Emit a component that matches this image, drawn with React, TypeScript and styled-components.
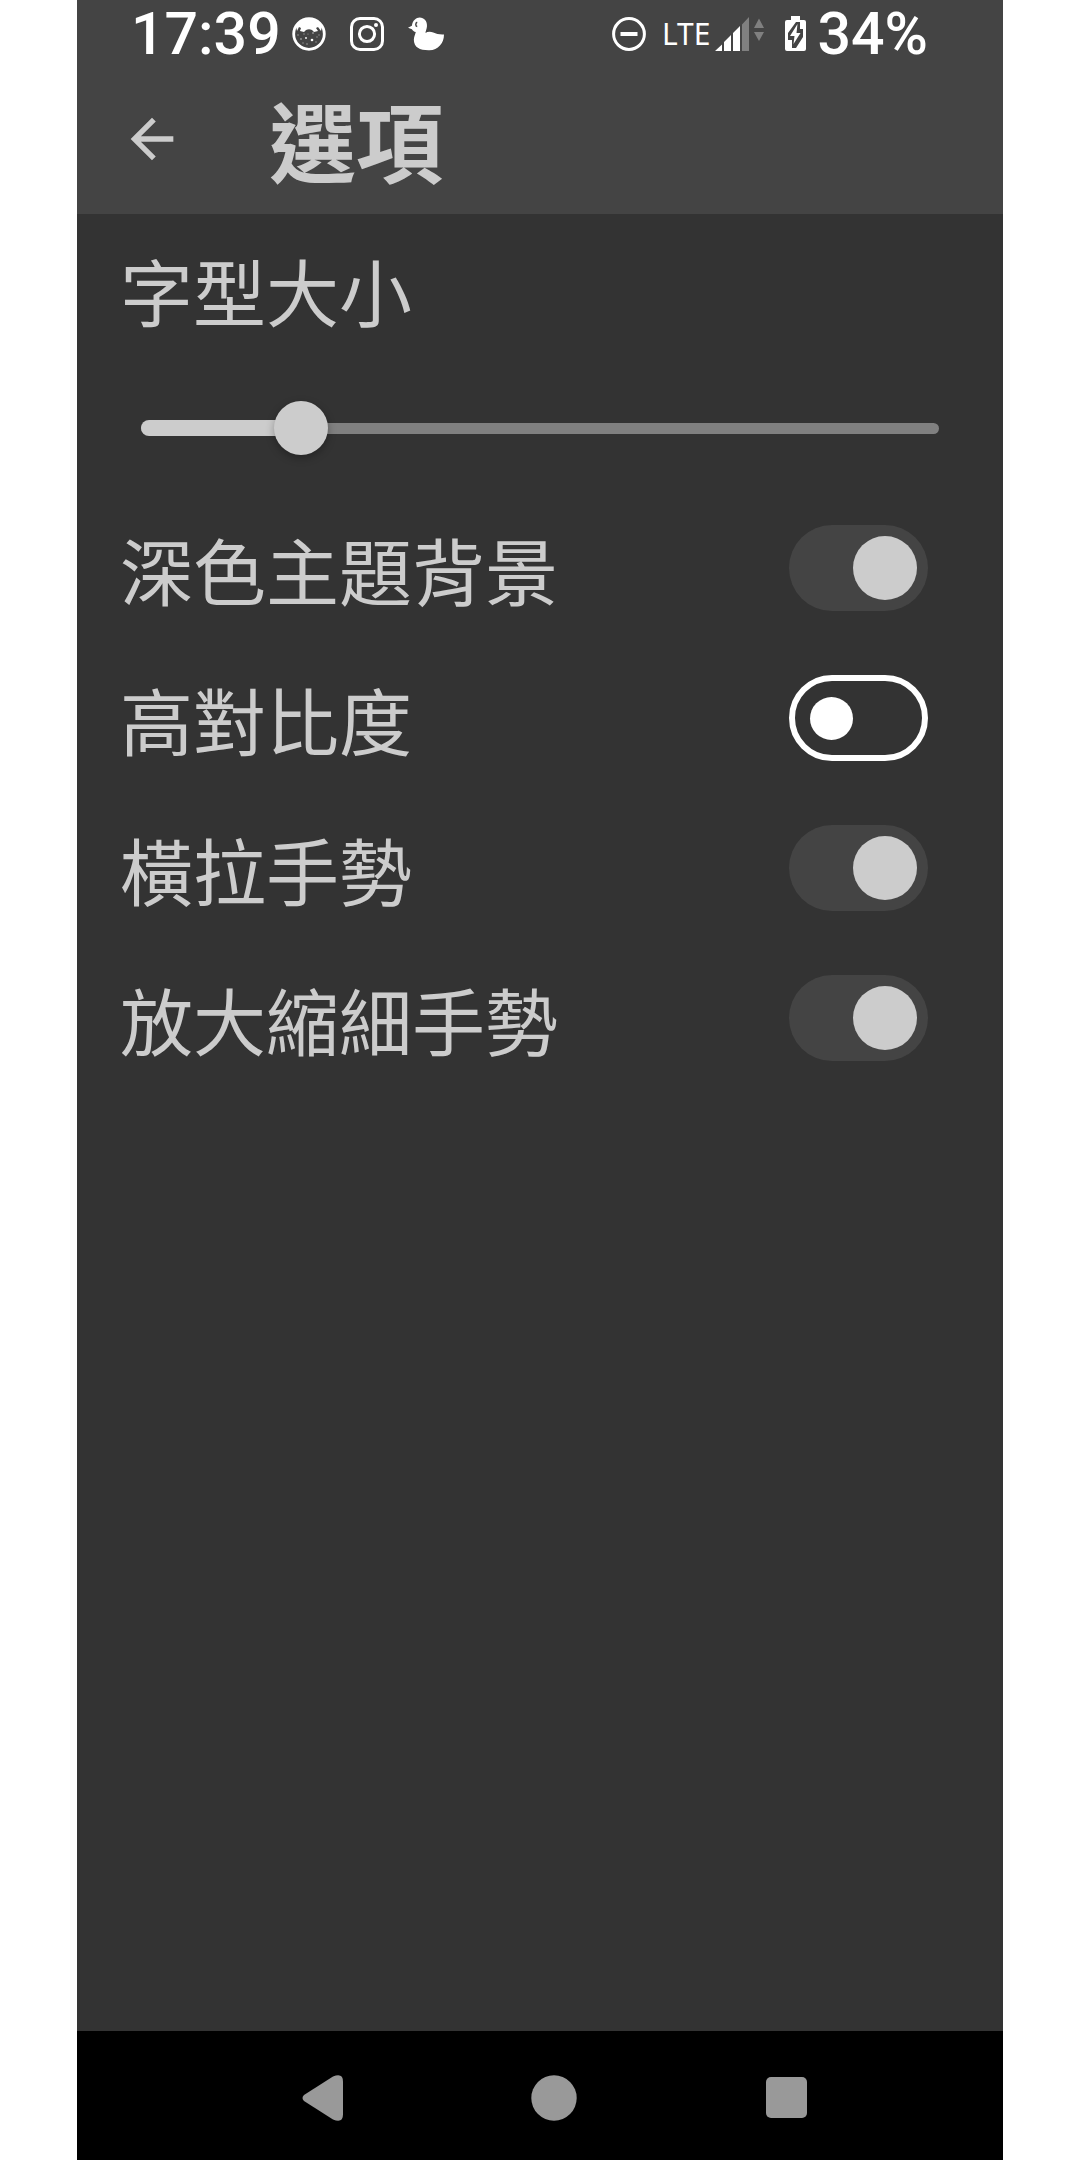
import React, { useState } from 'react';
import styled, { createGlobalStyle } from 'styled-components';

const GlobalStyle = createGlobalStyle`
  *, *::before { box-sizing: border-box; }
  body { margin: 0; background: #fff; }
`;

const Phone = styled.div`
  display: flex;
  flex-direction: column;
  max-width: 926px;
  min-height: 100vh;
  margin: 0 auto;
  background: #333;
  color: #ccc;
  font-family: Roboto, 'Noto Sans CJK TC', sans-serif;
`;

const StatusBar = styled.div`
  display: flex;
  justify-content: space-between;
  height: 64px;
  padding: 4px 75px 0 54px;
  background: #444;
  color: #fff;
`;

const StatusGroup = styled.div<{ $gap: number }>`
  display: flex;
  align-items: center;
  gap: ${(p) => p.$gap}px;
`;

const StatusText = styled.span`
  font-size: 59px;
  font-weight: 500;
  line-height: 60px;
`;

const NetworkText = styled.span`
  font-family: 'Noto Sans', sans-serif;
  font-size: 30px;
  line-height: 32px;
`;

const Icon = styled.svg`
  display: block;
  flex: none;
`;

const AppBar = styled.header`
  display: flex;
  align-items: center;
  gap: 85px;
  height: 150px;
  padding: 0 43px;
  background: #444;
`;

const IconButton = styled.button`
  padding: 0;
  border: 0;
  background: none;
  color: inherit;
  cursor: pointer;
`;

const Title = styled.h1`
  margin: 0;
  font-family: 'Noto Sans CJK TC', sans-serif;
  font-size: 87px;
  font-weight: 700;
  line-height: 96px;
`;

const Content = styled.main`
  flex: 1;
  padding: 33px 75px 32px 43px;
`;

const Label = styled.label`
  display: block;
  font-family: 'Noto Sans CJK TC', sans-serif;
  font-size: 73px;
  line-height: 84px;
`;

const Slider = styled.div`
  display: grid;
  align-items: center;
  height: 54px;
  margin: 70px -11px 38px 21px;
  > * { grid-area: 1 / 1; }
`;

const Track = styled.div`
  height: 11px;
  border-radius: 6px;
  background: #808080;
`;

const Fill = styled.div`
  height: 16px;
  border-radius: 8px;
  background: #ccc;
`;

const Range = styled.input`
  appearance: none;
  width: calc(100% + 54px);
  height: 54px;
  margin: 0 -27px;
  background: transparent;
  &::-webkit-slider-thumb {
    appearance: none;
    width: 54px;
    height: 54px;
    border-radius: 50%;
    background: #ccc;
    box-shadow: 0 3px 8px rgba(0, 0, 0, 0.3);
  }
`;

const Row = styled.div`
  display: flex;
  align-items: center;
  justify-content: space-between;
  height: 150px;
`;

const Switch = styled.input`
  appearance: none;
  display: flex;
  flex: none;
  align-items: center;
  width: 139px;
  height: 86px;
  margin: 0;
  padding: 0 15px;
  border: 6px solid #fff;
  border-radius: 43px;
  &::before {
    content: '';
    width: 43px;
    height: 43px;
    border-radius: 50%;
    background: #fff;
  }
  &:checked {
    justify-content: flex-end;
    padding: 0 11px;
    border: 0;
    background: #444;
  }
  &:checked::before {
    width: 64px;
    height: 64px;
    background: #ccc;
  }
`;

const NavBar = styled.nav`
  display: flex;
  justify-content: center;
  height: 129px;
  padding: 4px 0 0 28px;
  background: #000;
  color: #999;
`;

const NavButton = styled(IconButton)`
  display: grid;
  flex: none;
  place-items: center;
  width: 232px;
`;

const CatIcon = () => (
  <Icon width="34" height="34" viewBox="0 0 34 34">
    <circle cx="17" cy="17" r="15.3" fill="none" stroke="currentColor" strokeWidth="2.8" />
    <path fill="currentColor" d="M4 9C7 4 11 1 17 1s10 3 13 8l-1 5-3-4-2 1 2 3-4 1-2-2c-2-1-4-1-6 0l-2 2-4-1 1-3-2-1-2 4z" />
    <g fill="#999">
      <circle cx="6" cy="18" r=".8" /><circle cx="12" cy="17" r=".7" />
      <circle cx="21" cy="16" r=".9" /><circle cx="27" cy="18" r=".7" />
      <circle cx="9" cy="22" r=".9" /><circle cx="15" cy="27" r=".8" />
      <circle cx="24" cy="25" r=".7" /><circle cx="16" cy="17" r=".6" />
      <circle cx="25" cy="20" r=".7" /><circle cx="11" cy="26" r=".7" />
    </g>
    <circle cx="20" cy="23" r="1.3" fill="currentColor" />
    <circle cx="14" cy="21" r=".9" fill="currentColor" />
  </Icon>
);

const CameraIcon = () => (
  <Icon width="34" height="34" viewBox="0 0 34 34" fill="none" stroke="currentColor" strokeWidth="3">
    <rect x="1.5" y="1.5" width="31" height="31" rx="8.5" />
    <circle cx="17" cy="17" r="7.6" />
    <circle cx="26" cy="8" r="2" fill="currentColor" stroke="none" />
  </Icon>
);

const DuckIcon = () => (
  <Icon width="36" height="34" viewBox="0 0 37 34">
    <path fill="currentColor" d="M4 8.500C4.500 3 8.500 0 12 0c4.500 0 8 4 7.500 9-.2 3-1.500 5-1.500 7 2-1.500 5-1.700 8-.5 3 1.200 7 2.500 11 2 0 9-6 16-15 16.300C12.500 34 6 31 6 23c0-3 1.500-5.500 2-8-2-.5-3-1.500-4-3L0 10.500z" />
    <path fill="none" stroke="#444" strokeWidth="1.500" d="M9.500 5c-2 .5-2 4 0 4.300" />
  </Icon>
);

const DoNotDisturbIcon = () => (
  <Icon width="34" height="34" viewBox="0 0 34 34" fill="none" stroke="currentColor">
    <circle cx="17" cy="17" r="15.400" strokeWidth="3" />
    <path strokeWidth="4" d="M8.500 17h17" />
  </Icon>
);

const SignalIcon = () => (
  <Icon width="50" height="34" viewBox="0 0 50 34">
    <path fill="currentColor" d="M0 34l7-6.500V34zM9 25l7-7v16H9zM18 16l7-7v25h-7z" />
    <path fill="#808080" d="M27 7.500L34 0v34h-7zM39 11l5-9.500 5 9.500zM39 15h10l-5 9z" />
  </Icon>
);

const BatteryIcon = () => (
  <Icon width="21" height="36" viewBox="0 0 21 36">
    <path fill="currentColor" d="M6 0h9v4h4q2 0 2 2v27q0 2-2 2H2q-2 0-2-2V6q0-2 2-2h4z" />
    <path fill="#444" d="M11 6h4v7h3v8L11 32H7V24H3v-7z" />
    <path fill="currentColor" d="M12.500 8L5 20h4.500L8.500 28l7-11h-4z" />
  </Icon>
);

const BackIcon = () => (
  <Icon width="64" height="64" viewBox="0 0 24 24" fill="currentColor">
    <path d="M20 11H7.830l5.590-5.590L12 4l-8 8 8 8 1.410-1.410L7.830 13H20z" />
  </Icon>
);

const switches = [
  { id: 'dark', label: '深色主題背景', on: true },
  { id: 'contrast', label: '高對比度', on: false },
  { id: 'swipe', label: '橫拉手勢', on: true },
  { id: 'pinch', label: '放大縮細手勢', on: true },
];

export default function App() {
  const [size, setSize] = useState(20);
  return (
    <Phone>
      <GlobalStyle />
      <StatusBar>
        <StatusGroup $gap={24}>
          <StatusGroup $gap={11}>
            <StatusText>17:39</StatusText>
            <CatIcon />
          </StatusGroup>
          <CameraIcon />
          <DuckIcon />
        </StatusGroup>
        <StatusGroup $gap={11}>
          <StatusGroup $gap={20}>
            <StatusGroup $gap={16}>
              <DoNotDisturbIcon />
              <StatusGroup $gap={5}>
                <NetworkText>LTE</NetworkText>
                <SignalIcon />
              </StatusGroup>
            </StatusGroup>
            <BatteryIcon />
          </StatusGroup>
          <StatusText>34%</StatusText>
        </StatusGroup>
      </StatusBar>
      <AppBar>
        <IconButton aria-label="返回"><BackIcon /></IconButton>
        <Title>選項</Title>
      </AppBar>
      <Content>
        <Label htmlFor="font-size">字型大小</Label>
        <Slider>
          <Track />
          <Fill style={{ width: `${size}%` }} />
          <Range
            id="font-size"
            type="range"
            min="0"
            max="100"
            value={size}
            onChange={(e) => setSize(Number(e.target.value))}
          />
        </Slider>
        {switches.map((s) => (
          <Row key={s.id}>
            <Label htmlFor={s.id}>{s.label}</Label>
            <Switch id={s.id} type="checkbox" defaultChecked={s.on} />
          </Row>
        ))}
      </Content>
      <NavBar>
        <NavButton aria-label="返回">
          <Icon width="41" height="46" viewBox="0 0 41 46" fill="currentColor">
            <path d="M2 20L31 1.500q10-4 10 5v33q0 9-10 5L2 26q-3-3 0-6z" />
          </Icon>
        </NavButton>
        <NavButton aria-label="主畫面">
          <Icon width="46" height="46" viewBox="0 0 46 46" fill="currentColor">
            <circle cx="23" cy="23" r="22.700" />
          </Icon>
        </NavButton>
        <NavButton aria-label="最近使用">
          <Icon width="41" height="41" viewBox="0 0 41 41" fill="currentColor">
            <rect width="41" height="41" rx="5" />
          </Icon>
        </NavButton>
      </NavBar>
    </Phone>
  );
}
